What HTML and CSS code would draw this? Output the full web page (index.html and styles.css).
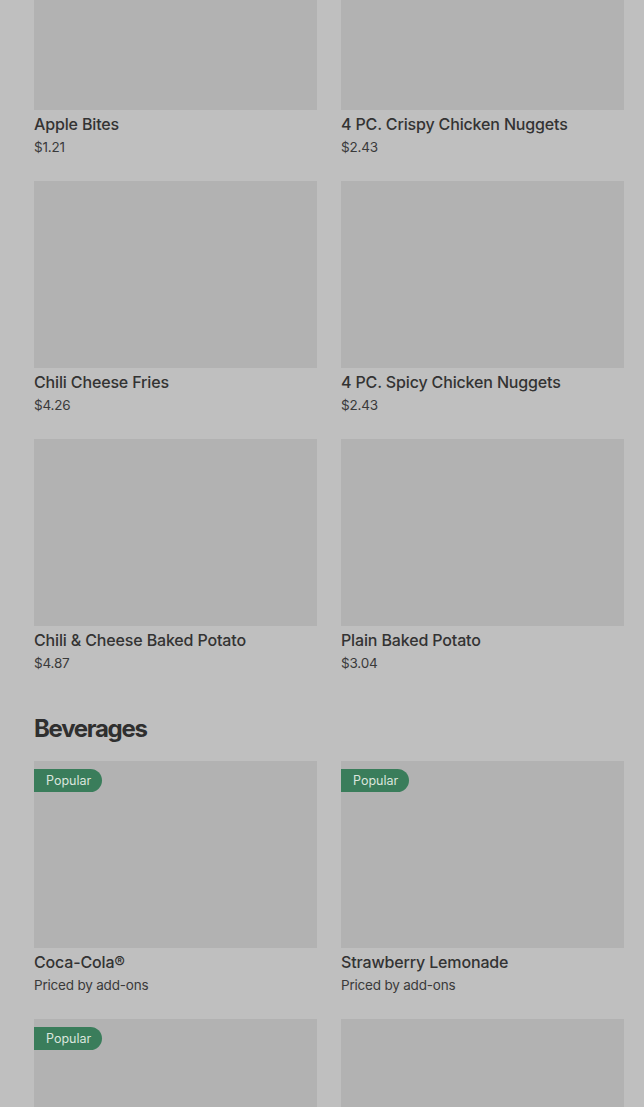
FILE: index.html
```html
<!DOCTYPE html>
<html lang="en">
<head>
    <meta charset="UTF-8">
    <meta name="viewport" content="width=device-width, initial-scale=1.0">
    <title>Menu</title>
    <link rel="stylesheet" href="styles.css">
</head>
<body>

    <div class="menu">
        <section class="section section-top">
            <div class="grid">
                <div class="card">
                    <div class="photo"></div>
                    <div class="name">Apple Bites</div>
                    <div class="price">$1.21</div>
                </div>
                <div class="card">
                    <div class="photo"></div>
                    <div class="name">4 PC. Crispy Chicken Nuggets</div>
                    <div class="price">$2.43</div>
                </div>
                <div class="card">
                    <div class="photo"></div>
                    <div class="name">Chili Cheese Fries</div>
                    <div class="price">$4.26</div>
                </div>
                <div class="card">
                    <div class="photo"></div>
                    <div class="name">4 PC. Spicy Chicken Nuggets</div>
                    <div class="price">$2.43</div>
                </div>
                <div class="card">
                    <div class="photo"></div>
                    <div class="name">Chili &amp; Cheese Baked Potato</div>
                    <div class="price">$4.87</div>
                </div>
                <div class="card">
                    <div class="photo"></div>
                    <div class="name">Plain Baked Potato</div>
                    <div class="price">$3.04</div>
                </div>
            </div>
        </section>

        <section class="section">
            <h2 class="section-title">Beverages</h2>
            <div class="grid">
                <div class="card">
                    <div class="photo"><span class="badge">Popular</span></div>
                    <div class="name">Coca-Cola®</div>
                    <div class="price">Priced by add-ons</div>
                </div>
                <div class="card">
                    <div class="photo"><span class="badge">Popular</span></div>
                    <div class="name">Strawberry Lemonade</div>
                    <div class="price">Priced by add-ons</div>
                </div>
                <div class="card">
                    <div class="photo"><span class="badge">Popular</span></div>
                </div>
                <div class="card">
                    <div class="photo"></div>
                </div>
            </div>
        </section>
    </div>

</body>
</html>
```

FILE: styles.css
```css
html, body {
    height: 100%;
    overflow: hidden;
}
body {
    font-family: Inter, Roboto, "Liberation Sans", Arial, sans-serif;
    color: #333;
    background-color: #bfbfbf;
    margin: 0;
}
.menu {
    padding: 0 20px 0 34px;
}
.section-top {
    margin-top: -77px;
}
.grid {
    display: grid;
    grid-template-columns: 283px 283px;
    column-gap: 24px;
    row-gap: 24px;
}
.photo {
    position: relative;
    height: 187px;
    background-color: #b2b2b2;
}
.name {
    padding-top: 4px;
    font-size: 16px;
    font-weight: 500;
    line-height: 20px;
    letter-spacing: -0.15px;
    color: #333;
}
.price {
    margin-top: 3px;
    font-size: 13.5px;
    line-height: 20px;
    color: #3a3a3a;
    letter-spacing: -0.2px;
}
.section-title {
    margin: 40px 0 16px;
    font-size: 24px;
    font-weight: 700;
    line-height: 32px;
    letter-spacing: -1.3px;
    color: #2f2f2f;
}
.badge {
    position: absolute;
    top: 8px;
    left: 0;
    height: 23px;
    line-height: 23px;
    padding: 0 11px 0 12px;
    font-size: 12.5px;
    color: #dbe6de;
    background-color: #3a7d5b;
    border-radius: 0 12px 12px 0;
}
```
